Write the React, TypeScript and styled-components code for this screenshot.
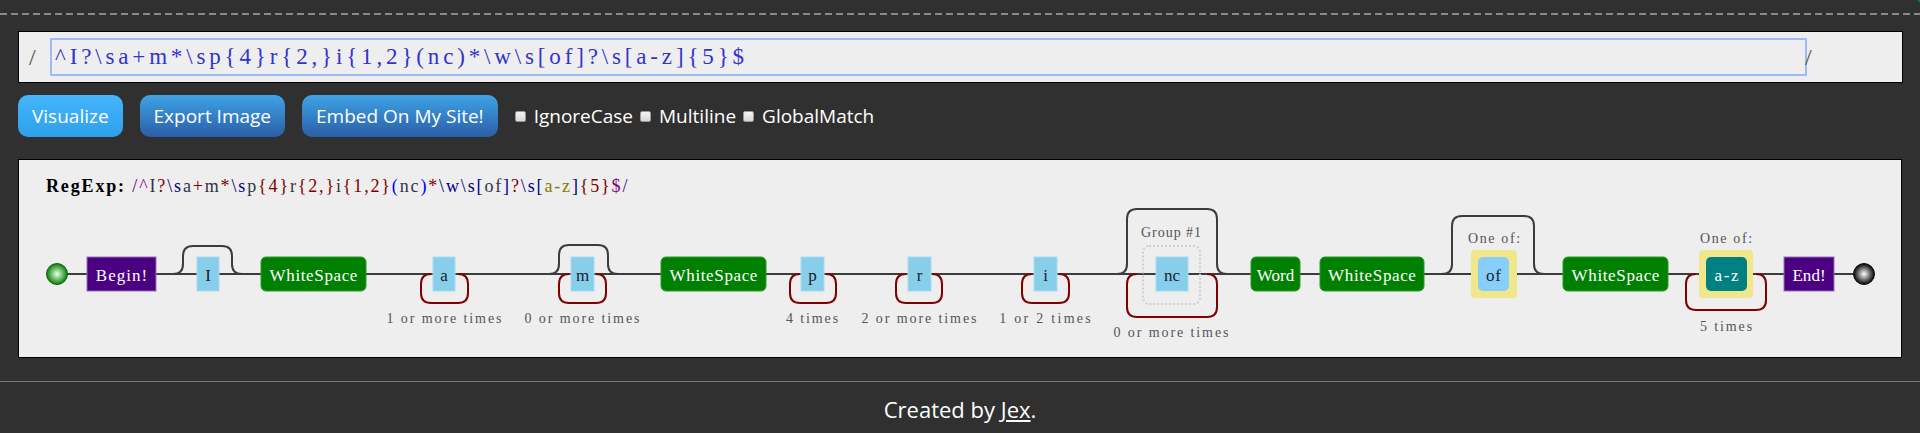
import React from 'react'
import styled, { createGlobalStyle } from 'styled-components'

const GlobalStyle = createGlobalStyle`
    html, body {
        margin : 0;
        padding : 0;
        background : #303030;
    }
    body {
        font-family : 'Open Sans', 'Noto Sans', sans-serif;
        overflow : hidden;
    }
`

const REGEX = '^I?\\sa+m*\\sp{4}r{2,}i{1,2}(nc)*\\w\\s[of]?\\s[a-z]{5}$'

// colours used by the highlighted source line above the diagram
const HL = {
    delim : 'indigo',
    assert : 'purple',
    exact : '#334',
    quant : 'maroon',
    group : 'blue',
    klass : 'navy',
    range : 'olive',
}

const tokens: [string, string][] = [
    ['/', HL.delim], ['^', HL.assert], ['I', HL.exact], ['?', HL.quant], ['\\s', HL.klass],
    ['a', HL.exact], ['+', HL.quant], ['m', HL.exact], ['*', HL.quant], ['\\s', HL.klass],
    ['p', HL.exact], ['{4}', HL.quant], ['r', HL.exact], ['{2,}', HL.quant], ['i', HL.exact],
    ['{1,2}', HL.quant], ['(', HL.group], ['nc', HL.exact], [')', HL.group], ['*', HL.quant],
    ['\\w', HL.klass], ['\\s', HL.klass], ['[', HL.klass], ['of', HL.exact], [']', HL.klass],
    ['?', HL.quant], ['\\s', HL.klass], ['[', HL.klass], ['a-z', HL.range], [']', HL.klass],
    ['{5}', HL.quant], ['$', HL.assert], ['/', HL.delim],
]

type Kind = 'assert' | 'exact' | 'klass' | 'charExact' | 'charRange'

const kinds: Record<Kind, { fill: string, stroke: string, rx: number, text: string }> = {
    assert : { fill : '#4b0082', stroke : '#9470b8', rx : 0, text : '#fff' },
    exact : { fill : '#87ceeb', stroke : '#a6dbef', rx : 0, text : '#1b1b2b' },
    klass : { fill : '#008000', stroke : '#2c9a2c', rx : 5, text : '#fff' },
    charExact : { fill : '#87cefa', stroke : 'none', rx : 5, text : '#223' },
    charRange : { fill : '#008080', stroke : 'none', rx : 5, text : '#fff' },
}

const Y = 274
// the original draws with a fixed-pitch font; these are its cell widths
const NODE_PITCH = 9.1
const LABEL_PITCH = 7.85

const nodes: { label: string, kind: Kind, x: number, w: number, natural?: boolean }[] = [
    { label : 'Begin!', kind : 'assert', x : 87, w : 69 },
    { label : 'I', kind : 'exact', x : 197, w : 22 },
    { label : 'WhiteSpace', kind : 'klass', x : 261, w : 105 },
    { label : 'a', kind : 'exact', x : 433, w : 22 },
    { label : 'm', kind : 'exact', x : 571, w : 23 },
    { label : 'WhiteSpace', kind : 'klass', x : 661, w : 105 },
    { label : 'p', kind : 'exact', x : 801, w : 23 },
    { label : 'r', kind : 'exact', x : 908, w : 23 },
    { label : 'i', kind : 'exact', x : 1034, w : 23 },
    { label : 'nc', kind : 'exact', x : 1156, w : 32, natural : true },
    { label : 'Word', kind : 'klass', x : 1251, w : 49, natural : true },
    { label : 'WhiteSpace', kind : 'klass', x : 1320, w : 104 },
    { label : 'of', kind : 'charExact', x : 1478, w : 31 },
    { label : 'WhiteSpace', kind : 'klass', x : 1563, w : 105 },
    { label : 'a-z', kind : 'charRange', x : 1706, w : 41 },
    { label : 'End!', kind : 'assert', x : 1784, w : 50 },
]

const charsets = [
    { x : 1471, w : 46 },
    { x : 1699, w : 54 },
]

// optional branches drawn above the track: [start, end, top]
const skips = [
    [173, 242, 246],
    [549, 618, 245],
    [1117, 1227, 209],
    [1442, 1544, 216],
]

// repeat loops drawn below the track: [left, right, bottom]
const loops = [
    [421, 468, 303],
    [559, 606, 303],
    [790, 836, 303],
    [896, 942, 303],
    [1022, 1069, 303],
    [1127, 1217, 317],
    [1686, 1766, 310],
]

const labels: [string, number, number][] = [
    ['1 or more times', 444, 318],
    ['0 or more times', 582, 318],
    ['4 times', 812, 318],
    ['2 or more times', 919, 318],
    ['1 or 2 times', 1045, 318],
    ['Group #1', 1171, 232],
    ['0 or more times', 1171, 332],
    ['One of:', 1494, 238],
    ['One of:', 1726, 238],
    ['5 times', 1726, 326],
]

const skipPath = ([a, b, top]: number[]) =>
    `M${a} ${Y} Q${a + 10} ${Y} ${a + 10} ${Y - 10} V${top + 10} Q${a + 10} ${top} ${a + 20} ${top} ` +
    `H${b - 20} Q${b - 10} ${top} ${b - 10} ${top + 10} V${Y - 10} Q${b - 10} ${Y} ${b} ${Y}`

const loopPath = ([l, r, bottom]: number[]) =>
    `M${l + 10} ${Y} Q${l} ${Y} ${l} ${Y + 10} V${bottom - 10} Q${l} ${bottom} ${l + 10} ${bottom} ` +
    `H${r - 10} Q${r} ${bottom} ${r} ${bottom - 10} V${Y + 10} Q${r} ${Y} ${r - 10} ${Y}`

const fit = (text: string, pitch: number) =>
    text.length > 1 ? { textLength : (text.length - 0.35) * pitch, lengthAdjust : 'spacing' } : {}

const Diagram = () => (
    <DiagramSvg viewBox='19 160 1882 197' width={1882} height={197}>
        <defs>
            <radialGradient id='startGrad' cx='0.5' cy='0.5' r='0.5'>
                <stop offset='0' stopColor='#eeffee' />
                <stop offset='1' stopColor='#008000' />
            </radialGradient>
            <radialGradient id='endGrad' cx='0.5' cy='0.5' r='0.5'>
                <stop offset='0' stopColor='#ffffff' />
                <stop offset='1' stopColor='#000000' />
            </radialGradient>
        </defs>

        <SourceText x={46} y={192}>
            <tspan fontWeight='bold' fill='#000'>{'RegExp: '}</tspan>
            {tokens.map(([t, c], i) => <tspan key={`tok_${i}`} fill={c}>{t}</tspan>)}
        </SourceText>

        <Track d={`M57 ${Y} H1864`} />
        {skips.map((s, i) => <Track key={`skip_${i}`} d={skipPath(s)} />)}
        {loops.map((l, i) => <Loop key={`loop_${i}`} d={loopPath(l)} />)}

        <GroupBox x={1143} y={246} width={57} height={58} rx={6} />
        {charsets.map((c, i) => <rect key={`cs_${i}`} x={c.x} y={250} width={c.w} height={48} rx={4} fill='#f0e68c' />)}

        {nodes.map((n, i) => {
            const k = kinds[n.kind]
            return (
                <g key={`node_${i}`}>
                    <rect x={n.x} y={Y - 17} width={n.w} height={34} rx={k.rx} fill={k.fill} stroke={k.stroke} strokeWidth={1} />
                    <NodeText x={n.x + n.w / 2} y={Y + 1} fill={k.text} {...(n.natural ? {} : fit(n.label, NODE_PITCH))}>
                        {n.label}
                    </NodeText>
                </g>
            )
        })}

        {labels.map(([t, x, y], i) => <LabelText key={`lbl_${i}`} x={x} y={y} {...fit(t, LABEL_PITCH)}>{t}</LabelText>)}

        <circle cx={57} cy={Y} r={10.5} fill='url(#startGrad)' stroke='#1d5e1d' strokeWidth={1} />
        <circle cx={1864} cy={Y} r={10.5} fill='url(#endGrad)' stroke='#111' strokeWidth={1} />
    </DiagramSvg>
)

const App = () => (
    <Page>
        <GlobalStyle />
        <Ribbon />
        <TopRule />

        <InputBox>
            <Slash>/</Slash>
            <RegexInput value={REGEX} readOnly spellCheck={false} />
            <Slash $end>/</Slash>
        </InputBox>

        <Toolbar>
            <Button $bright>Visualize</Button>
            <Button>Export Image</Button>
            <Button>Embed On My Site!</Button>
            <Flag><Check type='checkbox' />IgnoreCase</Flag>
            <Flag><Check type='checkbox' />Multiline</Flag>
            <Flag><Check type='checkbox' />GlobalMatch</Flag>
        </Toolbar>

        <Panel>
            <Diagram />
        </Panel>

        <Footer>
            Created by <a href='#'>Jex</a>.
        </Footer>
    </Page>
)

const Page = styled.div`
    position : relative;
    width : 1920px;
    height : 433px;
    overflow : hidden;
    background : #303030;
    display : flex;
    flex-direction : column;
`

const Ribbon = styled.div`
    position : absolute;
    top : -4px;
    right : -14px;
    width : 30px;
    height : 4px;
    background : #1f9a2e;
    border-bottom : 1px solid #0d5a16;
    transform : rotate(45deg);
`

const TopRule = styled.div`
    margin-top : 13px;
    height : 2px;
    background : repeating-linear-gradient(90deg, #8a8a8a 0 7px, transparent 7px 11px);
`

const InputBox = styled.div`
    box-sizing : border-box;
    margin : 16px 17px 0 18px;
    height : 52px;
    border : 1px solid #000;
    background : #eeeeee;
    display : flex;
    align-items : center;
    padding-left : 10px;
`

const Slash = styled.span<{ $end?: boolean }>`
    font-family : 'Liberation Serif', serif;
    font-size : 24px;
    color : #554;
    width : ${(props) => props.$end ? 'auto' : '21px'};
    margin-left : ${(props) => props.$end ? '-2px' : '0'};
    line-height : 1;
`

const RegexInput = styled.input`
    box-sizing : border-box;
    width : 1757px;
    height : 38px;
    border : 2px solid #9dbcf6;
    border-radius : 1px;
    background : transparent;
    padding : 0 0 0 3px;
    font-family : 'Liberation Serif', serif;
    font-size : 23px;
    letter-spacing : 3.85px;
    color : #3333cc;
    outline : none;
`

const Toolbar = styled.div`
    display : flex;
    align-items : center;
    margin : 12px 0 0 18px;
    height : 42px;
    gap : 17px;
`

const Button = styled.button<{ $bright?: boolean }>`
    height : 42px;
    padding : 0 14px;
    border : none;
    border-radius : 10px;
    color : #fff;
    font-family : 'Open Sans', sans-serif;
    font-size : 19px;
    cursor : pointer;
    background : ${(props) => props.$bright
        ? 'linear-gradient(#43b6fc, #2f9fea)'
        : 'linear-gradient(#3ea3e6, #2b5ea6)'};
`

const Flag = styled.label`
    display : flex;
    align-items : center;
    gap : 8px;
    color : #fff;
    font-size : 19px;
    margin-right : -10px;
`

const Check = styled.input`
    appearance : none;
    margin : 0;
    width : 11px;
    height : 11px;
    border-radius : 2px;
    border : 1px solid #9a9a9a;
    background : linear-gradient(#f4f4f4, #d8d8d8);
`

const Panel = styled.div`
    box-sizing : border-box;
    margin : 22px 18px 0 18px;
    height : 199px;
    border : 1px solid #000;
    background : #eeeeee;
`

const DiagramSvg = styled.svg`
    display : block;
`

const SourceText = styled.text`
    font-family : 'Liberation Serif', serif;
    font-size : 18px;
    letter-spacing : 1.85px;
    white-space : pre;
`

const Track = styled.path`
    fill : none;
    stroke : #3c3c3c;
    stroke-width : 2;
`

const Loop = styled.path`
    fill : none;
    stroke : #800000;
    stroke-width : 2;
`

const GroupBox = styled.rect`
    fill : none;
    stroke : #cfcfcf;
    stroke-width : 2;
    stroke-dasharray : 2 2;
`

const NodeText = styled.text`
    font-family : 'Liberation Serif', serif;
    font-size : 17px;
    text-anchor : middle;
    dominant-baseline : central;
`

const LabelText = styled.text`
    font-family : 'Liberation Serif', serif;
    font-size : 14px;
    fill : #555;
    text-anchor : middle;
    dominant-baseline : central;
`

const Footer = styled.div`
    margin-top : 23px;
    border-top : 1px solid #7a7a7a;
    padding-top : 12px;
    line-height : 30px;
    text-align : center;
    color : #fff;
    font-size : 22px;

    a {
        color : #fff;
    }
`

export default App
